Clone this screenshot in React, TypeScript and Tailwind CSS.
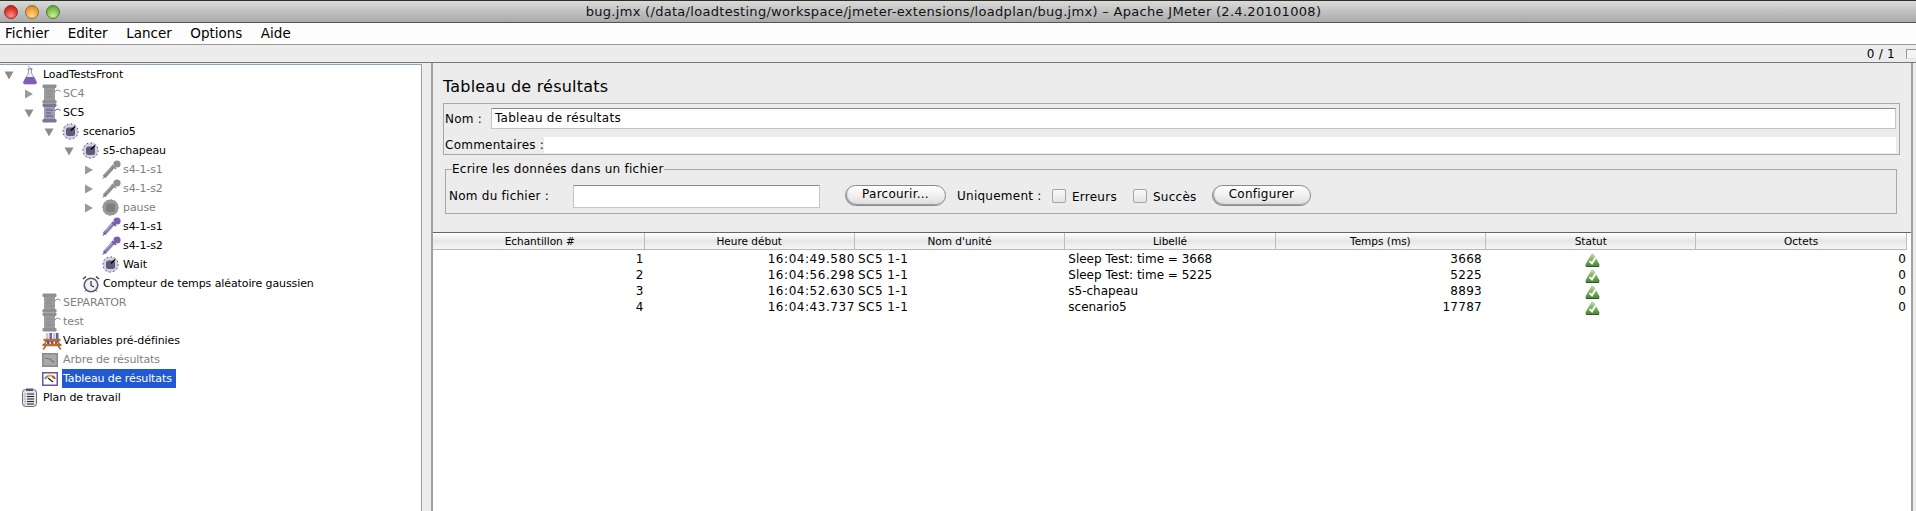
import React from 'react';

const font = { fontFamily: '"DejaVu Sans", sans-serif' };

const Arrow = ({ open }: { open?: boolean }) => (
  <svg width="10" height="10" viewBox="0 0 10 10" className="ml-[1px]">
    {open ? <path d="M0.5 1.5 L9.5 1.5 L5 9.5 Z" fill="#8c8c8c" /> : <path d="M1 0.5 L9 5 L1 9.5 Z" fill="#9a9a9a" />}
  </svg>
);

const Flask = () => (
  <svg width="16" height="20" viewBox="0 0 16 20">
    <path d="M6 1 L10 4 M6.5 4 L6.5 8 L1.5 17 Q1 19 3 19 L13 19 Q15 19 14.5 17 L9.5 8 L9.5 4" fill="#f1eef7" stroke="#a09eb0" strokeWidth="1" />
    <path d="M4 12 L12 12 L14.5 17 Q15 19 13 19 L3 19 Q1 19 1.5 17 Z" fill="#7f5fb5" />
    <rect x="5.5" y="3.5" width="5" height="1" fill="#77748a" />
  </svg>
);

const Spool = ({ muted }: { muted?: boolean }) => {
  const dark = muted ? '#8f8f8f' : '#7b7694';
  const body = muted ? '#9c9c9c' : '#9f9ab6';
  const line = muted ? '#8a8a8a' : '#5f5a78';
  return (
    <svg width="20" height="20" viewBox="0 0 20 20">
      <rect x="0.5" y="0.5" width="14" height="3.5" rx="1.2" fill={dark} />
      <rect x="2" y="4" width="11" height="12" fill={body} />
      <path d="M4 7 H11 M4 10 H9 M4 13 H11" stroke={line} strokeWidth="1" />
      <rect x="0.5" y="16" width="14" height="3.5" rx="1.2" fill={dark} />
      <path d="M13 8 Q15 4.5 18.5 7.5" fill="none" stroke={line} strokeWidth="1" />
    </svg>
  );
};

const Dial = ({ muted }: { muted?: boolean }) => (
  <svg width="17" height="17" viewBox="0 0 17 17">
    <circle cx="8.5" cy="8.5" r="8" fill={muted ? '#9a9a9a' : '#d4cfe2'} />
    <circle cx="8.5" cy="8.5" r="7.6" fill="none" stroke={muted ? '#777777' : '#222222'} strokeWidth="1" strokeDasharray="1 3" />
    <rect x="4" y="4.5" width="9" height="8.5" rx="2.5" fill={muted ? '#7f7f7f' : '#5f5a78'} />
    {!muted && <path d="M9 7.5 L13 3.5" stroke="#000000" strokeWidth="1.5" />}
  </svg>
);

const Pipette = ({ muted }: { muted?: boolean }) => (
  <svg width="19" height="19" viewBox="0 0 19 19">
    <path d="M2 17 L11.5 6.5" stroke={muted ? '#8c8c8c' : '#8a7ab4'} strokeWidth="3.6" />
    <path d="M3.5 14 L11 6" stroke={muted ? '#a8a8a8' : '#cfc8e6'} strokeWidth="0.8" />
    <path d="M0.8 18.6 L3 16" stroke={muted ? '#777777' : '#3a3550'} strokeWidth="1" />
    <path d="M10 5 L14 9" stroke={muted ? '#8c8c8c' : '#5e4f8c'} strokeWidth="1.6" />
    <circle cx="15" cy="4" r="3.6" fill={muted ? '#8f8f8f' : '#7d5fb2'} />
  </svg>
);

const Clock = () => (
  <svg width="18" height="18" viewBox="0 0 18 18">
    <circle cx="9" cy="10" r="6.8" fill="#f2f0f6" stroke="#5f5a70" strokeWidth="1.6" />
    <path d="M9 6 V10.5 L12 12" fill="none" stroke="#333333" strokeWidth="1.2" />
    <path d="M1 4 L4 1.5 M17 4 L14 1.5" stroke="#444444" strokeWidth="1.6" />
    <path d="M3 16.5 L4.5 15 M15 16.5 L13.5 15" stroke="#444444" strokeWidth="1" />
  </svg>
);

const Rack = () => (
  <svg width="20" height="18" viewBox="0 0 20 18">
    <rect x="4" y="1" width="2.5" height="9" fill="#c9c4dc" />
    <rect x="7.5" y="1" width="2.5" height="9" fill="#7a58b0" />
    <rect x="11" y="1" width="2.5" height="9" fill="#c9c4dc" />
    <rect x="14" y="1" width="2.5" height="9" fill="#4a62b8" />
    <rect x="5" y="9" width="2.5" height="5" fill="#3f51a8" />
    <rect x="9" y="9" width="2.5" height="5" fill="#c03a3a" />
    <rect x="13" y="9" width="2.5" height="5" fill="#7a58b0" />
    <path d="M1.5 8 H18.5 M0.5 13 H19.5" stroke="#b8702f" strokeWidth="2.4" />
    <path d="M1 17.5 L4 14 M19 17.5 L16 14 M2 13 L5 8 M18 13 L15 8" stroke="#a05c24" strokeWidth="1.4" />
  </svg>
);

const Gauge = ({ muted }: { muted?: boolean }) => (
  <svg width="16" height="14" viewBox="0 0 16 14">
    <rect x="0.75" y="0.75" width="14.5" height="12.5" fill={muted ? '#a8a8a8' : '#ffffff'} stroke={muted ? '#8a8a8a' : '#6b549c'} strokeWidth="1.5" />
    {muted ? (
      <path d="M3 5 L8 6 L12 9.5" fill="none" stroke="#777777" strokeWidth="1.2" />
    ) : (
      <>
        <path d="M3 7 A5 5 0 0 1 6 4" fill="none" stroke="#4caf50" strokeWidth="2" />
        <path d="M6 4 A5 5 0 0 1 10 4" fill="none" stroke="#e8b030" strokeWidth="2" />
        <path d="M10 4 A5 5 0 0 1 13 7" fill="none" stroke="#d04030" strokeWidth="2" />
        <path d="M6 6 L11 10" stroke="#222222" strokeWidth="1.2" />
      </>
    )}
  </svg>
);

const Clipboard = () => (
  <svg width="15" height="19" viewBox="0 0 15 19">
    <rect x="0.5" y="1.5" width="14" height="17" rx="3" fill="#e4e2ea" stroke="#6d6a80" />
    <rect x="4" y="0.5" width="7" height="2.5" fill="#55526a" />
    <path d="M5 6 H12 M5 8.5 H12 M5 11 H12 M5 13.5 H12 M5 16 H12" stroke="#222222" strokeWidth="1" />
    <path d="M2.5 6 H3.5 M2.5 8.5 H3.5 M2.5 11 H3.5 M2.5 13.5 H3.5 M2.5 16 H3.5" stroke="#4a9a4a" strokeWidth="1" />
  </svg>
);

const StatusOk = () => (
  <svg width="15" height="14" viewBox="0 0 15 14">
    <defs>
      <linearGradient id="okFill" x1="0" y1="0" x2="0" y2="1">
        <stop offset="0" stopColor="#c6dfc0" />
        <stop offset="0.5" stopColor="#79b05f" />
        <stop offset="1" stopColor="#4a8a36" />
      </linearGradient>
    </defs>
    <path d="M7.5 0.5 Q8.5 0.5 9 1.5 L14.5 11.5 Q15 13 13.5 13 L1.5 13 Q0 13 0.5 11.5 L6 1.5 Q6.5 0.5 7.5 0.5 Z" fill="url(#okFill)" />
    <path d="M1 13 H14 V14 H1 Z" fill="#2d5a22" />
    <path d="M4.5 8 L7 10.5 L10.5 4.5" fill="none" stroke="#ffffff" strokeWidth="2" />
  </svg>
);

type TreeRow = {
  label: string;
  pad: string;
  icon: React.ReactNode;
  arrow?: 'open' | 'closed';
  muted?: boolean;
  selected?: boolean;
};

const treeRows: TreeRow[] = [
  { label: 'LoadTestsFront', pad: 'pl-[3px]', icon: <Flask />, arrow: 'open' },
  { label: 'SC4', pad: 'pl-[23px]', icon: <Spool muted />, arrow: 'closed', muted: true },
  { label: 'SC5', pad: 'pl-[23px]', icon: <Spool />, arrow: 'open' },
  { label: 'scenario5', pad: 'pl-[43px]', icon: <Dial />, arrow: 'open' },
  { label: 's5-chapeau', pad: 'pl-[63px]', icon: <Dial />, arrow: 'open' },
  { label: 's4-1-s1', pad: 'pl-[83px]', icon: <Pipette muted />, arrow: 'closed', muted: true },
  { label: 's4-1-s2', pad: 'pl-[83px]', icon: <Pipette muted />, arrow: 'closed', muted: true },
  { label: 'pause', pad: 'pl-[83px]', icon: <Dial muted />, arrow: 'closed', muted: true },
  { label: 's4-1-s1', pad: 'pl-[83px]', icon: <Pipette /> },
  { label: 's4-1-s2', pad: 'pl-[83px]', icon: <Pipette /> },
  { label: 'Wait', pad: 'pl-[83px]', icon: <Dial /> },
  { label: 'Compteur de temps aléatoire gaussien', pad: 'pl-[63px]', icon: <Clock /> },
  { label: 'SEPARATOR', pad: 'pl-[23px]', icon: <Spool muted />, muted: true },
  { label: 'test', pad: 'pl-[23px]', icon: <Spool muted />, muted: true },
  { label: 'Variables pré-définies', pad: 'pl-[23px]', icon: <Rack /> },
  { label: 'Arbre de résultats', pad: 'pl-[23px]', icon: <Gauge muted />, muted: true },
  { label: 'Tableau de résultats', pad: 'pl-[23px]', icon: <Gauge />, selected: true },
  { label: 'Plan de travail', pad: 'pl-[3px]', icon: <Clipboard /> },
];

const columns = ['Echantillon #', 'Heure début', "Nom d'unité", 'Libellé', 'Temps (ms)', 'Statut', 'Octets'];

const results = [
  { n: '1', time: '16:04:49.580', unit: 'SC5 1-1', label: 'Sleep Test: time = 3668', ms: '3668' },
  { n: '2', time: '16:04:56.298', unit: 'SC5 1-1', label: 'Sleep Test: time = 5225', ms: '5225' },
  { n: '3', time: '16:04:52.630', unit: 'SC5 1-1', label: 's5-chapeau', ms: '8893' },
  { n: '4', time: '16:04:43.737', unit: 'SC5 1-1', label: 'scenario5', ms: '17787' },
];

const AquaButton = ({ label, width }: { label: string; width: string }) => (
  <button className={`${width} h-[21px] rounded-full border border-[#8a8a8a] bg-gradient-to-b from-white via-[#f0f0f0] to-[#dcdcdc] text-[12px] leading-[17px] text-black pb-[2px] shadow-[inset_1px_-1px_1px_#9a9a9a]`}>
    {label}
  </button>
);

const AquaCheck = () => (
  <span className="block w-[14px] h-[14px] rounded-[2px] border border-[#a5a5a5] bg-gradient-to-b from-[#fafafa] to-[#e4e4e4] shrink-0 mt-[1px]" />
);

export default function App() {
  return (
    <div className="w-[1916px] h-[511px] overflow-hidden flex flex-col bg-[#ececec] text-black" style={font}>
      {/* title bar */}
      <div className="relative h-[23px] shrink-0 border-t border-t-[#2a2f20] border-b border-b-[#555555] bg-gradient-to-b from-[#dadada] to-[#a9a9a9] flex items-center justify-center pr-[9px]">
        <div className="absolute left-[4px] top-[4px] flex gap-[7px]">
          <span className="block w-[14px] h-[14px] rounded-full border border-[#8a3030] bg-[radial-gradient(circle_at_50%_80%,#ff8d84,#dd2c25_65%,#a81c18)]" />
          <span className="block w-[14px] h-[14px] rounded-full border border-[#96683a] bg-[radial-gradient(circle_at_50%_80%,#ffd98a,#ee9a2e_65%,#b86f1c)]" />
          <span className="block w-[14px] h-[14px] rounded-full border border-[#4f7a38] bg-[radial-gradient(circle_at_50%_80%,#c8f090,#79b648_65%,#4e8a2c)]" />
        </div>
        <span className="text-[13px] tracking-[0.3px] leading-none text-[#111111]">bug.jmx (/data/loadtesting/workspace/jmeter-extensions/loadplan/bug.jmx) – Apache JMeter (2.4.20101008)</span>
      </div>

      {/* menu */}
      <div className="h-[22px] shrink-0 bg-[#fdfdfd] border-b border-[#999999] flex items-center gap-[18.5px] pl-[5px] text-[13.5px]">
        <span>Fichier</span>
        <span>Editer</span>
        <span>Lancer</span>
        <span>Options</span>
        <span>Aide</span>
      </div>

      {/* toolbar strip */}
      <div className="h-[17px] shrink-0 bg-[#ececec] flex items-center justify-end text-[12px] tracking-[0.25px]">
        <span className="mr-[11px]">0 / 1</span>
        <span className="block w-[10px] h-[10px] border border-[#999999] border-r-0 border-b-[#e0e0e0] bg-[#f4f4f4]" />
      </div>

      <div className="flex-1 flex min-h-0 border-t border-[#777777]">
        {/* tree */}
        <div className="w-[422px] shrink-0 mt-[1px] bg-white border-t border-r border-[#8ea2b8] text-[11px] tracking-[-0.1px]">
          {treeRows.map((row, i) => (
            <div key={i} className={`h-[19px] flex items-center ${row.pad}`}>
              <div className="w-[19px] shrink-0 flex items-center">
                {row.arrow && <Arrow open={row.arrow === 'open'} />}
              </div>
              <div className="w-[21px] shrink-0 h-[19px] flex items-center">{row.icon}</div>
              <span className={`h-[19px] leading-[19px] whitespace-nowrap ${row.selected ? '-ml-[1px] px-[1px] pr-[4px] bg-[#2259d2] text-white' : row.muted ? 'text-[#808080]' : 'text-black'}`}>
                {row.label}
              </span>
            </div>
          ))}
        </div>

        {/* results panel */}
        <div className="w-[1482px] shrink-0 ml-[9px] flex flex-col border-l-2 border-r-2 border-[#a0a0a0] min-h-0">
          <div className="pl-[10px] pr-[11px] text-[12px] tracking-[0.25px]">
            <div className="h-[40px] pt-[14px] text-[16px] tracking-[0.2px] leading-[20px]">Tableau de résultats</div>

            <div className="h-[52px] border border-[#a8a8a8] pl-[1px] pr-[3px] pt-[4px]">
              <div className="flex items-center h-[21px]">
                <span className="w-[46px] shrink-0">Nom :</span>
                <div className="flex-1 h-[21px] bg-white border border-[#c4c4c4] border-t-[#8a8a8a] pl-[3px] leading-[18px]">Tableau de résultats</div>
              </div>
              <div className="flex items-center h-[16px] mt-[8px]">
                <span className="w-[99px] shrink-0 whitespace-nowrap">Commentaires :</span>
                <div className="flex-1 h-[16px] bg-white" />
              </div>
            </div>

            <fieldset className="ml-[2px] mr-[3px] mt-[7px] border border-[#a8a8a8] px-[3px] pb-[5px]">
              <legend className="ml-[3px] h-[14px] leading-[14px]">Ecrire les données dans un fichier</legend>
              <div className="mt-[9px] h-[23px] flex items-start">
                <span className="w-[124px] shrink-0 leading-[22px]">Nom du fichier :</span>
                <div className="w-[247px] h-[23px] shrink-0 bg-white border border-[#c4c4c4] border-t-[#8a8a8a]" />
                <div className="ml-[25px]">
                  <AquaButton label="Parcourir..." width="w-[101px]" />
                </div>
                <span className="ml-[11px] w-[95px] shrink-0 leading-[22px]">Uniquement :</span>
                <div className="h-[21px] flex items-center"><AquaCheck /></div>
                <span className="ml-[6px] w-[61px] shrink-0 leading-[24px]">Erreurs</span>
                <div className="h-[21px] flex items-center"><AquaCheck /></div>
                <span className="ml-[6px] w-[59px] shrink-0 leading-[24px]">Succès</span>
                <AquaButton label="Configurer" width="w-[99px]" />
              </div>
            </fieldset>
          </div>

          {/* results table */}
          <div className="mt-[18px] flex-1 bg-white border-t border-[#666666]">
            <div className="grid grid-cols-[211.5px_repeat(6,210.4px)] h-[17px] border-b border-[#b8b8b8] bg-gradient-to-b from-white via-[#e6e6e6] to-[#f6f6f6] w-[1473.5px]">
              {columns.map((col, i) => (
                <div key={col} className={`text-center border-r border-[#bdbdbd] leading-[16px] text-[10.5px] ${i === 0 ? 'pl-[3px]' : ''}`}>{col}</div>
              ))}
            </div>
            <div className="text-[12px] pt-[2px]">
              {results.map(r => (
                <div key={r.n} className="grid grid-cols-[211.5px_repeat(6,210.4px)] h-[16px] leading-[15px]">
                  <div className="text-right pr-[1px]">{r.n}</div>
                  <div className="text-right tracking-[0.55px]">{r.time}</div>
                  <div className="pl-[3px] tracking-[0.5px]">{r.unit}</div>
                  <div className="pl-[3px]">{r.label}</div>
                  <div className="text-right pr-[4px] tracking-[0.3px]">{r.ms}</div>
                  <div className="flex justify-center items-center pl-[2px]"><StatusOk /></div>
                  <div className="text-right pr-[1px]">0</div>
                </div>
              ))}
            </div>
          </div>
        </div>
      </div>
    </div>
  );
}
